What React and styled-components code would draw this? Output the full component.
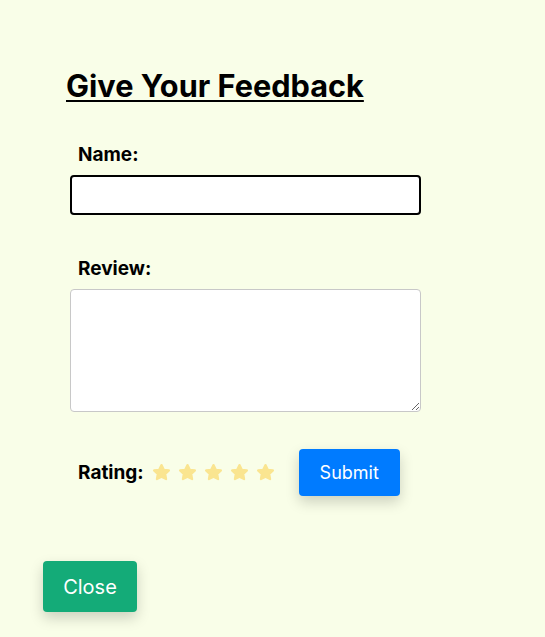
import React, { useState } from "react";
import styled, { createGlobalStyle } from "styled-components";

const GlobalStyle = createGlobalStyle`
  html, body {
    margin: 0;
    padding: 0;
    background: #f9fee8;
    font-family: Inter, "Noto Sans", sans-serif;
  }
`;

const Page = styled.div`
  min-height: 637px;
  padding-top: 67px;
  box-sizing: border-box;
`;

const FeedbackCard = styled.section`
  padding-left: 66px;
  width: 355px;
`;

const Title = styled.h1`
  margin: 0 0 39px;
  font-size: 30.7px;
  line-height: 37px;
  font-weight: 700;
  color: #000;
  white-space: nowrap;
  text-decoration: underline;
  text-decoration-thickness: 2px;
  text-underline-offset: 3px;
`;

const Form = styled.form`
  display: flex;
  flex-direction: column;
  padding-left: 4px;
`;

const Field = styled.div`
  display: flex;
  flex-direction: column;
  gap: 9px;
  margin-bottom: ${(p) => p.$spacing || 0}px;
`;

const Label = styled.label`
  padding-left: ${(p) => (p.$flush ? 0 : 8)}px;
  font-size: 19px;
  line-height: 23px;
  font-weight: 700;
  color: #000;
`;

const TextInput = styled.input`
  width: 351px;
  height: 40px;
  box-sizing: border-box;
  border: 2px solid #000;
  border-radius: 4px;
  background: #fff;
  outline: none;
  font: inherit;
  padding: 0 8px;
`;

const TextArea = styled.textarea`
  width: 351px;
  height: 123px;
  box-sizing: border-box;
  border: 1px solid #c8c8c8;
  border-radius: 4px;
  background: #fff;
  font: inherit;
  padding: 8px;
  resize: both;
`;

const RatingRow = styled.div`
  display: flex;
  align-items: center;
  padding-left: 8px;
`;

const Stars = styled.div`
  display: flex;
  gap: 7px;
  margin-left: 8px;
  margin-right: 24px;
`;

const StarButton = styled.span`
  display: inline-flex;
  cursor: pointer;
  color: ${(p) => (p.$active ? "#f5c518" : "#fae590")};
`;

const Button = styled.button`
  border: none;
  border-radius: 4px;
  color: #fff;
  font-family: Inter, "Noto Sans", sans-serif;
  cursor: pointer;
  box-shadow: 0 6px 14px rgba(0, 0, 0, 0.18);
`;

const SubmitButton = styled(Button)`
  width: 101px;
  height: 47px;
  background: #007bff;
  font-size: 18px;
`;

const CloseButton = styled(Button)`
  margin: 65px 0 0 43px;
  width: 94px;
  height: 51px;
  background: #14ab78;
  font-size: 20px;
`;

function Star() {
  return (
    <svg width="19" height="19" viewBox="0 0 24 24">
      <path
        d="M12 2.6l2.9 5.9 6.5.9-4.7 4.5 1.1 6.4L12 17.3l-5.8 3l1.1-6.4-4.7-4.5 6.5-.9z"
        fill="currentColor"
        stroke="currentColor"
        strokeWidth="2.8"
        strokeLinejoin="round"
      />
    </svg>
  );
}

export default function App() {
  const [rating, setRating] = useState(0);

  return (
    <>
      <GlobalStyle />
      <Page>
        <FeedbackCard>
          <Title>Give Your Feedback</Title>
          <Form onSubmit={(e) => e.preventDefault()}>
            <Field $spacing={42}>
              <Label htmlFor="name">Name:</Label>
              <TextInput id="name" type="text" />
            </Field>
            <Field $spacing={37}>
              <Label htmlFor="review">Review:</Label>
              <TextArea id="review" />
            </Field>
            <RatingRow>
              <Label as="span" $flush>Rating:</Label>
              <Stars>
                {[1, 2, 3, 4, 5].map((n) => (
                  <StarButton key={n} $active={n <= rating} onClick={() => setRating(n)}>
                    <Star />
                  </StarButton>
                ))}
              </Stars>
              <SubmitButton type="submit">Submit</SubmitButton>
            </RatingRow>
          </Form>
        </FeedbackCard>
        <CloseButton type="button">Close</CloseButton>
      </Page>
    </>
  );
}
